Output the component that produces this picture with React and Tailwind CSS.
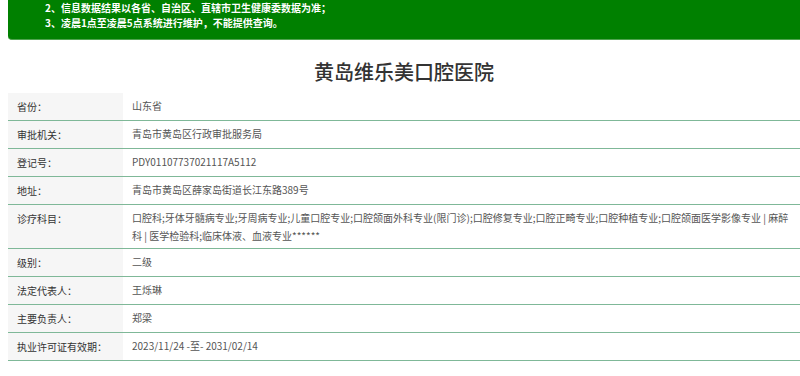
const rows = [
    { label: '省份：', value: '山东省' },
    { label: '审批机关：', value: '青岛市黄岛区行政审批服务局' },
    { label: '登记号：', value: 'PDY01107737021117A5112' },
    { label: '地址：', value: '青岛市黄岛区薛家岛街道长江东路389号' },
    {
        label: '诊疗科目：',
        value: '口腔科;牙体牙髓病专业;牙周病专业;儿童口腔专业;口腔颌面外科专业(限门诊);口腔修复专业;口腔正畸专业;口腔种植专业;口腔颌面医学影像专业 | 麻醉科 | 医学检验科;临床体液、血液专业******',
    },
    { label: '级别：', value: '二级' },
    { label: '法定代表人：', value: '王烁琳' },
    { label: '主要负责人：', value: '郑梁' },
    { label: '执业许可证有效期：', value: '2023/11/24 -至- 2031/02/14' },
];

const App = () => {
    return (
        <div
            className="w-[800px] h-[376px] overflow-hidden bg-white pl-2"
            style={{ fontFamily: '"Microsoft YaHei", "Noto Sans CJK SC", sans-serif' }}
        >
            {/* Notice banner */}
            <div className="h-[40px] bg-[#008000] rounded-bl-[4px] border-b border-[#4fa34f] pl-[37px] text-white text-[10px] font-bold leading-[15px]">
                <p>2、信息数据结果以各省、自治区、直辖市卫生健康委数据为准；</p>
                <p>3、凌晨1点至凌晨5点系统进行维护，不能提供查询。</p>
            </div>

            <h1 className="h-[53px] flex items-center justify-center text-[20px] font-medium text-[#333] pt-[11px]">
                黄岛维乐美口腔医院
            </h1>

            {/* Info table */}
            <div className="text-[10px] leading-[18px]">
                {rows.map(r => (
                    <div key={r.label} className="flex border-b border-[#7fb898]">
                        <div className="w-[115px] shrink-0 bg-[#f6f6f6] pl-[9px] pt-[5px] text-[#333]">
                            {r.label}
                        </div>
                        <div className="flex-1 min-h-[27px] pl-[9px] pr-[2px] pt-[4px] pb-[3px] text-[#555]">
                            {r.value}
                        </div>
                    </div>
                ))}
            </div>
        </div>
    );
};

export default App;
